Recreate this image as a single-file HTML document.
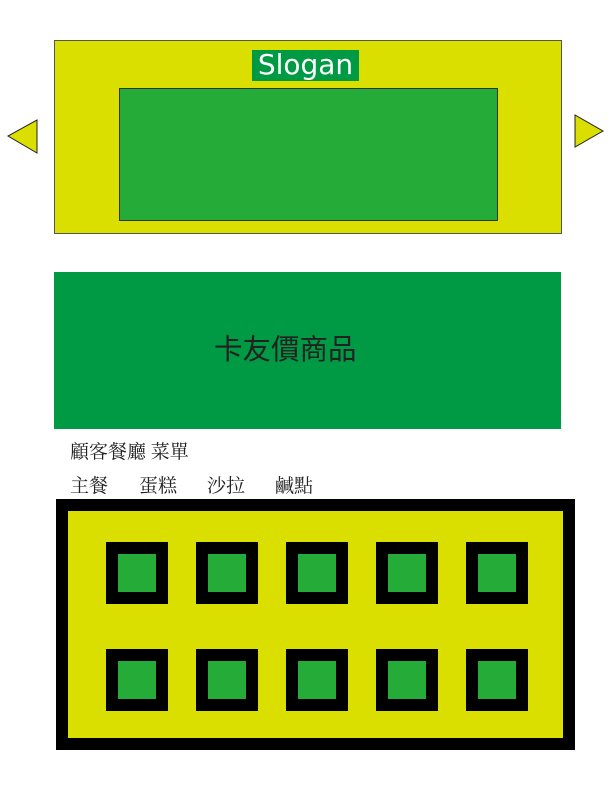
<!DOCTYPE html>
<html><head><meta charset="utf-8"><style>
body{margin:0;width:612px;height:792px;background:#fff;position:relative;overflow:hidden;font-family:"Liberation Sans","Noto Sans CJK TC",sans-serif}
div{position:absolute;box-sizing:border-box}
.sq{width:62px;height:62px;border:12px solid #000;background:#25ab38}
.t{font-size:19px;color:#222;font-family:"Liberation Serif","Noto Serif CJK SC",serif;line-height:20px;white-space:nowrap}
</style></head><body>
<div style="left:54px;top:40px;width:508px;height:194px;background:#dbdf00;border:1px solid #555"></div>
<div style="left:119px;top:88px;width:379px;height:133px;background:#25ab38;border:1px solid #333"></div>
<div style="left:252px;top:50px;width:107px;height:31px;background:#009a44;color:#fff;font-size:28px;line-height:30px;text-align:center;font-family:'DejaVu Sans',sans-serif">Slogan</div>
<svg style="position:absolute;left:0;top:0" width="612" height="200">
<polygon points="37,120 37,153 8,136" fill="#dbdf00" stroke="#222" stroke-width="1"/>
<polygon points="575,115 575,147 603,131" fill="#dbdf00" stroke="#222" stroke-width="1"/>
</svg>
<div style="left:54px;top:272px;width:507px;height:157px;background:#009a44"></div>
<div style="left:214px;top:333px;font-size:28.5px;color:#222;line-height:34px;white-space:nowrap">卡友價商品</div>
<div class="t" style="left:70px;top:443px">顧客餐廳 菜單</div>
<div class="t" style="left:70px;top:477px">主餐</div>
<div class="t" style="left:139px;top:477px">蛋糕</div>
<div class="t" style="left:207px;top:477px">沙拉</div>
<div class="t" style="left:275px;top:477px">鹹點</div>
<div style="left:56px;top:499px;width:519px;height:251px;background:#dbdf00;border:12px solid #000"></div>
<div class="sq" style="left:106px;top:542px"></div>
<div class="sq" style="left:196px;top:542px"></div>
<div class="sq" style="left:286px;top:542px"></div>
<div class="sq" style="left:376px;top:542px"></div>
<div class="sq" style="left:466px;top:542px"></div>
<div class="sq" style="left:106px;top:649px"></div>
<div class="sq" style="left:196px;top:649px"></div>
<div class="sq" style="left:286px;top:649px"></div>
<div class="sq" style="left:376px;top:649px"></div>
<div class="sq" style="left:466px;top:649px"></div>
</body></html>
